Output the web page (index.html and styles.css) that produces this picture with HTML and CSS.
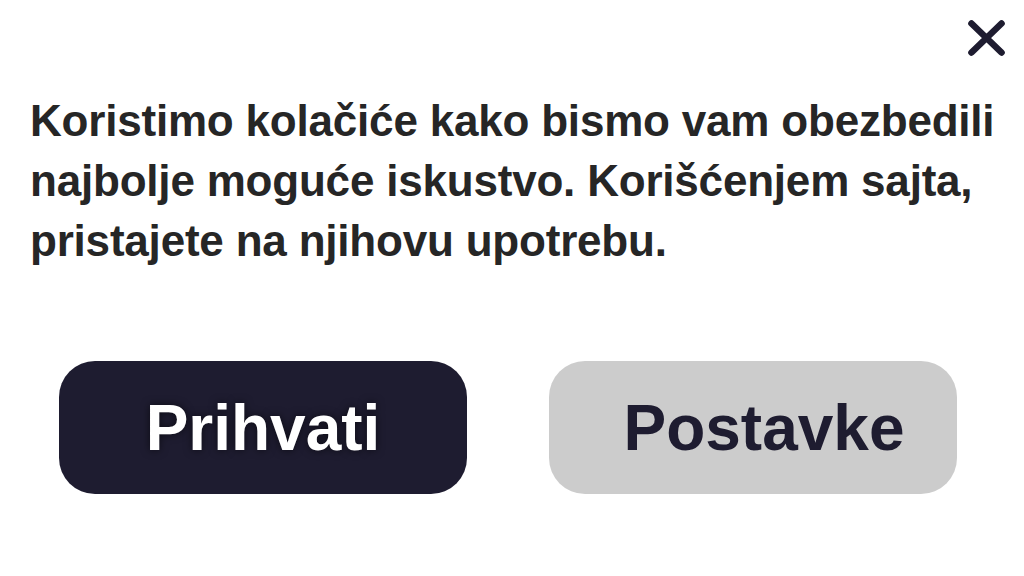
FILE: index.html
```html
<!DOCTYPE html>
<html lang="sr">
<head>
<meta charset="utf-8">
<title>Kolačići</title>
<link rel="stylesheet" href="styles.css">
</head>
<body>
<div class="dialog">
  <div class="header">
    <button class="close" aria-label="Zatvori">
      <svg width="37" height="36" viewBox="0 0 37 36"><path d="M3.5 3.5 L33.5 32.5 M33.5 3.5 L3.5 32.5" stroke="#1e1c30" stroke-width="6.6" stroke-linecap="round" fill="none"/></svg>
    </button>
  </div>
  <p class="message">Koristimo kolačiće kako bismo vam obezbedili najbolje moguće iskustvo. Korišćenjem sajta, pristajete na njihovu upotrebu.</p>
  <div class="actions">
    <button class="btn btn-primary">Prihvati</button>
    <button class="btn btn-secondary">Postavke</button>
  </div>
</div>
</body>
</html>
```

FILE: styles.css
```css
* { box-sizing: border-box; }
html, body {
  margin: 0;
  padding: 0;
  background: #ffffff;
  width: 1024px;
  height: 576px;
  overflow: hidden;
}
.dialog {
  display: flex;
  flex-direction: column;
  font-family: "Liberation Sans", Arial, sans-serif;
}
.header {
  display: flex;
  justify-content: flex-end;
  padding: 20px 19px 0 0;
  height: 56px;
}
.close {
  border: 0;
  background: none;
  padding: 0;
  margin: 0;
  width: 37px;
  height: 36px;
  display: block;
  cursor: pointer;
}
.close svg { display: block; }
.message {
  margin: 35px 0 0 0;
  padding: 0 0 0 30px;
  font-size: 44px;
  line-height: 60px;
  font-weight: 700;
  letter-spacing: -0.2px;
  color: #262626;
}
.actions {
  display: flex;
  gap: 82px;
  padding-left: 59px;
  margin-top: 90px;
}
.btn {
  width: 408px;
  height: 133px;
  border: 0;
  border-radius: 36px;
  font-family: "Liberation Sans", Arial, sans-serif;
  font-weight: 700;
  font-size: 64px;
  line-height: 1;
  padding: 0;
  cursor: pointer;
}
.btn-primary {
  background: #1e1c30;
  color: #ffffff;
  text-shadow: 0 0 8px rgba(0, 0, 0, 0.6);
}
.btn-secondary {
  background: #cccccc;
  color: #1e1c30;
  padding-left: 22px;
}
```
